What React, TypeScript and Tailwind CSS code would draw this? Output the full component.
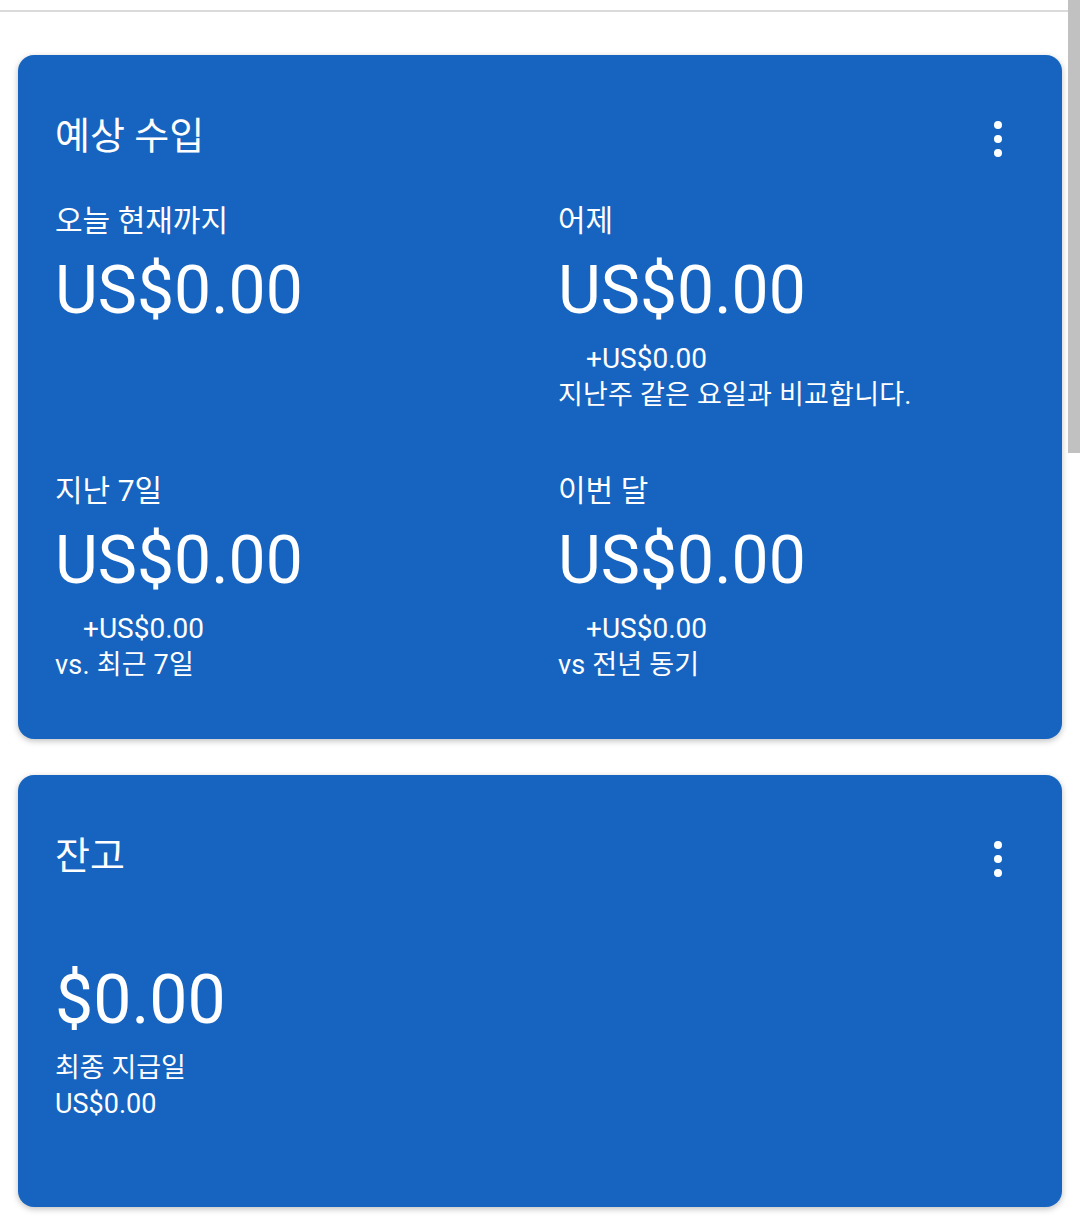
const font = { fontFamily: "Roboto, 'Noto Sans CJK KR', sans-serif" };

const Dots = () => (
  <div className="flex flex-col items-center gap-[6px] pt-[7px]">
    <span className="w-[8px] h-[8px] rounded-full bg-white" />
    <span className="w-[8px] h-[8px] rounded-full bg-white" />
    <span className="w-[8px] h-[8px] rounded-full bg-white" />
  </div>
);

const Stat = ({ label, amount, delta, note }: { label: string; amount: string; delta?: string; note?: string }) => (
  <div>
    <div className="text-[30px] leading-[36px] pt-[2px]">{label}</div>
    <div className="mt-[14px] text-[66px] leading-[76px]">{amount}</div>
    {delta && <div className="mt-[12px] pl-[28px] text-[28px] leading-[36px]">{delta}</div>}
    {note && <div className="text-[27px] leading-[36px] tracking-[0.2px]">{note}</div>}
  </div>
);

export default function App() {
  return (
    <div className="relative min-h-[1217px] bg-white text-white" style={font}>
      <div className="h-[10px]" />
      <div className="h-[2px] bg-[#dadada]" />
      <div className="absolute right-0 top-0 w-[12px] h-[453px] bg-[#c1c1c1]" />

      <div className="px-[18px] pt-[43px] flex flex-col gap-[36px]">
        <section className="rounded-[16px] bg-[#1664c0] shadow-[0_2px_6px_rgba(0,0,0,0.25)] pl-[37px] pr-[60px] pt-[59px] pb-[56px]">
          <div className="flex items-start justify-between h-[44px]">
            <h2 className="text-[38px] leading-[44px] font-normal">예상 수입</h2>
            <Dots />
          </div>
          <div className="mt-[43px] grid grid-cols-[503px_1fr] gap-y-[58px]">
            <Stat label="오늘 현재까지" amount="US$0.00" />
            <Stat label="어제" amount="US$0.00" delta="+US$0.00" note="지난주 같은 요일과 비교합니다." />
            <Stat label="지난 7일" amount="US$0.00" delta="+US$0.00" note="vs. 최근 7일" />
            <Stat label="이번 달" amount="US$0.00" delta="+US$0.00" note="vs 전년 동기" />
          </div>
        </section>

        <section className="rounded-[16px] bg-[#1664c0] shadow-[0_2px_6px_rgba(0,0,0,0.25)] pl-[37px] pr-[60px] pt-[59px] pb-[85px]">
          <div className="flex items-start justify-between h-[44px]">
            <h2 className="text-[38px] leading-[44px] font-normal">잔고</h2>
            <Dots />
          </div>
          <div className="mt-[84px] text-[68px] leading-[76px]">$0.00</div>
          <div className="mt-[12px] text-[27px] leading-[36px]">최종 지급일</div>
          <div className="text-[27px] leading-[36px]">US$0.00</div>
        </section>
      </div>
    </div>
  );
}
